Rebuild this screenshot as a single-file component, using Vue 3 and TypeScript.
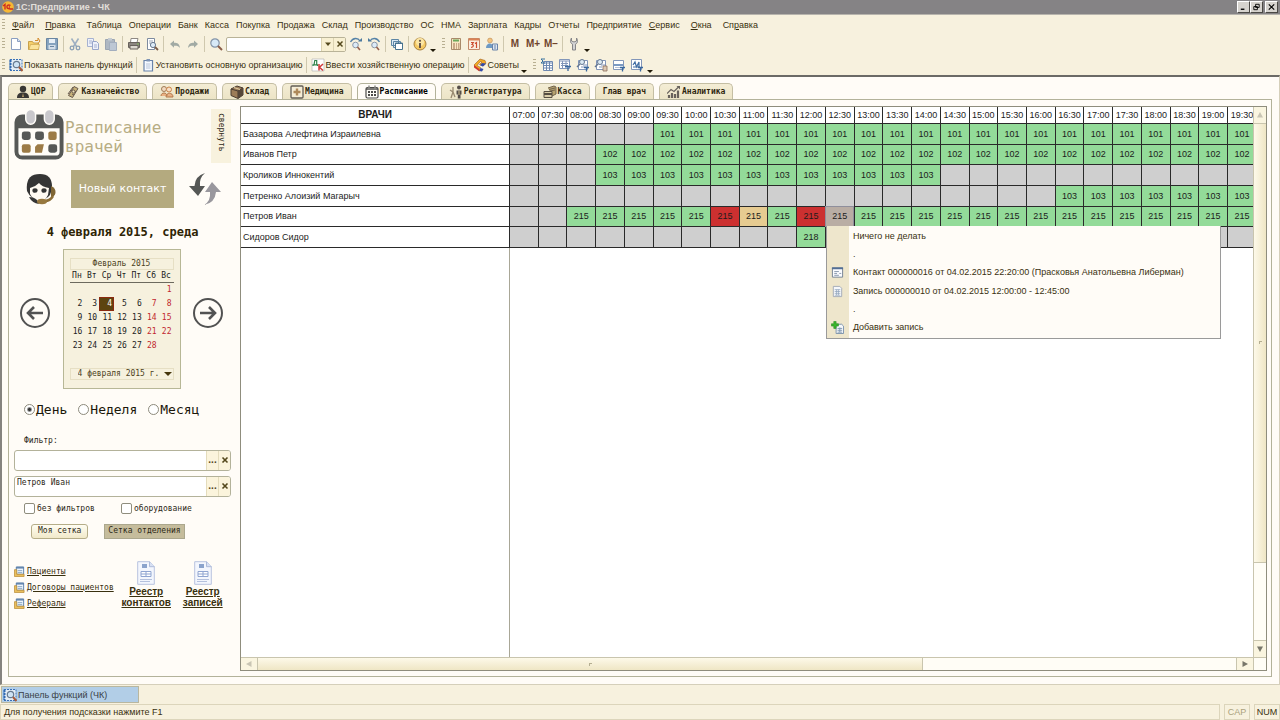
<script setup lang="ts">
import { ref } from 'vue'

interface MenuEntry { before?: string; key?: string; after: string; wide?: boolean }
interface Tab { id: string; label: string; icon?: string }
interface Doctor { name: string; room: string; from: number; to: number; marks?: Record<number, string> }
interface ContextEntry { text: string; icon?: string }

const menu: MenuEntry[] = [
  { key: 'Ф', after: 'айл', wide: true },
  { key: 'П', after: 'равка', wide: true },
  { after: 'Таблица' }, { after: 'Операции' }, { after: 'Банк' }, { after: 'Касса' },
  { after: 'Покупка' }, { after: 'Продажа' }, { after: 'Склад' }, { after: 'Производство' },
  { after: 'ОС' }, { after: 'НМА' }, { after: 'Зарплата' }, { after: 'Кадры' },
  { after: 'Отчеты' }, { after: 'Предприятие' },
  { key: 'С', after: 'ервис', wide: true },
  { key: 'О', after: 'кна', wide: true },
  { before: 'Сп', key: 'р', after: 'авка' },
]

const fileTools: string[][] = [['new', 'open', 'save'], ['cut', 'copy', 'paste'], ['print', 'preview'], ['undo', 'redo']]
const memory = ['M', 'M+', 'M−']
const actions = [
  { icon: 'panel', text: 'Показать панель функций' },
  { icon: 'clip', text: 'Установить основную организацию' },
  { icon: 'dk', text: 'Ввести хозяйственную операцию' },
  { icon: 'tips', text: 'Советы' },
]
const reports = ['rep1', 'rep2', 'rep3', 'rep4', 'rep5', 'rep6']

const tabs: Tab[] = [
  { id: 'cor', label: 'ЦОР', icon: 't-man' },
  { id: 'treasury', label: 'Казначейство', icon: 't-money' },
  { id: 'sales', label: 'Продажи', icon: 't-people' },
  { id: 'stock', label: 'Склад', icon: 't-box' },
  { id: 'medicine', label: 'Медицина', icon: 't-cross' },
  { id: 'schedule', label: 'Расписание', icon: 't-cal' },
  { id: 'registry', label: 'Регистратура', icon: 't-reg' },
  { id: 'cash', label: 'Касса', icon: 't-cash' },
  { id: 'chief', label: 'Глав врач' },
  { id: 'analytics', label: 'Аналитика', icon: 't-chart' },
]
const activeTab = ref('schedule')

const weekdays = ['Пн', 'Вт', 'Ср', 'Чт', 'Пт', 'Сб', 'Вс']
const weeks: (number | null)[][] = Array.from({ length: 5 }, (_, w) =>
  Array.from({ length: 7 }, (_, d) => {
    const day = w * 7 + d - 5
    return day >= 1 && day <= 28 ? day : null
  }),
)
const selectedDay = ref(4)
const period = ref('День')
const periods = ['День', 'Неделя', 'Месяц']
const filterA = ref('')
const filterB = ref('Петров Иван')
const links = ['Пациенты', 'Договоры пациентов', 'Рефералы']
const registers = [['Реестр', 'контактов'], ['Реестр', 'записей']]

const times = Array.from({ length: 26 }, (_, i) => {
  const h = String(7 + Math.floor(i / 2)).padStart(2, '0')
  return `${h}:${i % 2 ? '30' : '00'}`
})
const doctors: Doctor[] = [
  { name: 'Базарова Алефтина Израилевна', room: '101', from: 5, to: 25 },
  { name: 'Иванов Петр', room: '102', from: 3, to: 25 },
  { name: 'Кроликов Иннокентий', room: '103', from: 3, to: 14 },
  { name: 'Петренко Алоизий Магарыч', room: '103', from: 19, to: 25 },
  { name: 'Петров Иван', room: '215', from: 2, to: 25, marks: { 7: 'busy', 8: 'held', 10: 'busy', 11: 'picked' } },
  { name: 'Сидоров Сидор', room: '218', from: 10, to: 10 },
]
const isOpen = (d: Doctor, i: number) => i >= d.from && i <= d.to
const slotClass = (d: Doctor, i: number) => (isOpen(d, i) ? d.marks?.[i] ?? 'free' : 'off')

const contextMenu: ContextEntry[] = [
  { text: 'Ничего не делать' },
  { text: '.' },
  { text: 'Контакт 000000016 от 04.02.2015 22:20:00 (Прасковья Анатольевна Либерман)', icon: 'c-form' },
  { text: 'Запись 000000010 от 04.02.2015 12:00:00 - 12:45:00', icon: 'c-doc' },
  { text: '.' },
  { text: 'Добавить запись', icon: 'c-add' },
]
</script>

<template>
  <div class="app">
    <svg class="sprite" aria-hidden="true">
      <symbol id="new" viewBox="0 0 14 14"><path d="M2.5 1.5h6l3 3v8h-9z" fill="#fff" stroke="#8b9fc0" /><path d="M8.5 1.5v3h3" fill="#d7e2f3" stroke="#8b9fc0" /></symbol>
      <symbol id="open" viewBox="0 0 14 14"><path d="M1.500 4.500h4l1 1.500h5v6.500h-10z" fill="#f5cf6a" stroke="#c9a14a" /><path d="M2 12.500l1.500-5h9l-1 5z" fill="#fbe49b" stroke="#cfa850" stroke-width=".7" /><path d="M8 3.500h3V1l2 3-2 2.500" fill="none" stroke="#d48b2c" /></symbol>
      <symbol id="save" viewBox="0 0 14 14"><path d="M1.500 1.500h11v11h-11z" fill="#86a3bf" stroke="#6a86a2" /><path d="M4 2h6v4H4z" fill="#e8eff6" /><path d="M3.500 8h7v4.500h-7z" fill="#d4dee9" /><path d="M5 9.500h4" stroke="#6a86a2" /></symbol>
      <symbol id="cut" viewBox="0 0 14 14"><path d="M3.500 1.500l5 8M10.500 1.500l-5 8" stroke="#9fb0c2" stroke-width="1.600" /><circle cx="4" cy="11" r="1.800" fill="none" stroke="#8ca0b5" stroke-width="1.300" /><circle cx="10" cy="11" r="1.800" fill="none" stroke="#8ca0b5" stroke-width="1.300" /></symbol>
      <symbol id="copy" viewBox="0 0 14 14"><path d="M1.500 1.500h6v8h-6z" fill="#eef1fa" stroke="#a6b2d0" /><path d="M6.500 4.500h4l2 2v6h-6z" fill="#eef1fa" stroke="#98a6c9" /><path d="M3 4h3M3 6h3M8 8h3M8 10h3" stroke="#a6b2d0" /></symbol>
      <symbol id="paste" viewBox="0 0 14 14"><path d="M1.500 2.500h9v10h-9z" fill="#aeb7c2" stroke="#9ba5b1" /><path d="M4 1h4v2.500H4z" fill="#c5cbd2" /><path d="M5.500 5.500h7v8h-7z" fill="#bdc7d4" stroke="#a3aebe" /></symbol>
      <symbol id="print" viewBox="0 0 14 14"><path d="M4 1.500h7l-1 4H3.500z" fill="#fff" stroke="#8e8984" /><path d="M1.500 5.500h11v5h-11z" fill="#8b8580" stroke="#68625d" /><path d="M3 8.500h8v3.500H3z" fill="#ddd8d0" stroke="#68625d" /><circle cx="11" cy="7" r=".8" fill="#7ac04c" /></symbol>
      <symbol id="preview" viewBox="0 0 14 14"><path d="M2.500 1.500h7v11h-7z" fill="#fff" stroke="#7d8b9f" /><path d="M4 4h4M4 6h2" stroke="#9aa6b8" /><circle cx="8" cy="8" r="2.600" fill="#dcebf8" stroke="#67788f" /><path d="M10 10l3 3" stroke="#7a5b46" stroke-width="1.800" /></symbol>
      <symbol id="undo" viewBox="0 0 14 14"><path d="M2 7l4-3.500v2.200c3.500 0 5.500 1 6 5.300-1.500-2-3-2.500-6-2.300v2z" fill="#a1aaa4" /></symbol>
      <symbol id="redo" viewBox="0 0 14 14"><path d="M12 7L8 3.500v2.200c-3.500 0-5.500 1-6 5.300 1.500-2 3-2.500 6-2.300v2z" fill="#a1aaa4" /></symbol>
      <symbol id="find" viewBox="0 0 14 14"><circle cx="6" cy="6" r="4.200" fill="#d7e9f7" stroke="#8494a8" stroke-width="1.200" /><path d="M9 9l4 4" stroke="#8a5d48" stroke-width="2" /></symbol>
      <symbol id="next" viewBox="0 0 14 14"><circle cx="6.500" cy="8" r="2.800" fill="#dcebf8" stroke="#8a97a8" /><path d="M8.500 10l2.500 3" stroke="#96604d" stroke-width="1.600" /><path d="M1.500 5C4 .5 9 .5 11 4" fill="none" stroke="#5683a8" stroke-width="1.300" /><path d="M9 4.500h4V1z" fill="#4c7a9f" /></symbol>
      <symbol id="prev" viewBox="0 0 14 14"><circle cx="7.500" cy="8" r="2.800" fill="#dcebf8" stroke="#8a97a8" /><path d="M9.500 10l2.500 3" stroke="#96604d" stroke-width="1.600" /><path d="M12.500 5C10 .5 5 .5 3 4" fill="none" stroke="#5683a8" stroke-width="1.300" /><path d="M5 4.500H1V1z" fill="#4c7a9f" /></symbol>
      <symbol id="wins" viewBox="0 0 14 14"><path d="M1.500 2.500h7v6h-7zM3.500 4.500h7v6h-7z" fill="#dbe9f4" stroke="#5d86a5" /><path d="M5.500 6h7v6.500h-7z" fill="#fff" stroke="#48738f" /><path d="M5 6.500h8" stroke="#48738f" /></symbol>
      <symbol id="info" viewBox="0 0 14 14"><circle cx="7" cy="7" r="6" fill="#f5c964" stroke="#a88242" /><circle cx="7" cy="5" r="4" fill="#fbe6a5" /><path d="M7 6v5" stroke="#66554a" stroke-width="2" /><circle cx="7" cy="3.800" r="1.100" fill="#66554a" /></symbol>
      <symbol id="calc" viewBox="0 0 14 14"><path d="M2.500 1.500h9v11h-9z" fill="#f8e5c1" stroke="#a88a6a" /><path d="M4 3.500h6" stroke="#6ca85c" stroke-width="2" /><path d="M4 7h2M7 7h1M9 7h1.500M4 9h2M7 9h1M9 9h1.500M4 11h2M7 11h1M9 11h1.500" stroke="#996b4c" /></symbol>
      <symbol id="cal31" viewBox="0 0 14 14"><path d="M1.500 1.500h11v11h-11z" fill="#fbeee0" stroke="#c28a6a" /><path d="M2 2.500h10" stroke="#db8255" stroke-width="2" /><path d="M4 5.500h2.300L5 7.500c2 0 1.800 3-.9 2.800M8 6.500l1.500-1v5.500" fill="none" stroke="#cc4c2f" stroke-width="1.200" /></symbol>
      <symbol id="users" viewBox="0 0 14 14"><circle cx="5" cy="3.500" r="2.400" fill="#f3c47f" stroke="#ba8a55" stroke-width=".6" /><path d="M1 11c0-6 7-6 8 0z" fill="#6e9ac4" /><path d="M7.500 7h5v6h-5z" fill="#dce6f2" stroke="#6983a8" /><path d="M9 9h2M9 11h2" stroke="#6983a8" /></symbol>
      <symbol id="wrench" viewBox="0 0 14 14"><path d="M5.500 13V7.200C3 6 3 3 4.500 1v3l2.500 1 2.500-1V1c1.500 2 1.500 5-1 6.200V13z" fill="#d2d2d4" stroke="#858588" /></symbol>
      <symbol id="panel" viewBox="0 0 14 14"><path d="M1 1.500h12v11H1z" fill="#e4edf6" stroke="#3a72b8" stroke-dasharray="2 1" /><path d="M1.500 2v10" stroke="#2f69b3" stroke-width="2" stroke-dasharray="2 1" /><circle cx="7.500" cy="6.500" r="3.200" fill="#cfe3f4" stroke="#677a90" stroke-width="1.200" /><path d="M10 9l3.500 4" stroke="#a85b3b" stroke-width="2" /></symbol>
      <symbol id="clip" viewBox="0 0 14 14"><path d="M3 2.500h8.500v10.500H3z" fill="#f5f9ff" stroke="#6983aa" stroke-width="1.200" /><path d="M5.500 1h3.500v2.500H5.500z" fill="#7f95b5" /><path d="M5 6h4.500M5 8h4.500M5 10h4.500" stroke="#b7c4d8" /></symbol>
      <symbol id="dk" viewBox="0 0 14 14"><path d="M1 1h12v12H1z" fill="#fff" stroke="#b4b4b4" stroke-width=".7" /><path d="M2 8V6.800h4.500V8M3 6.800L3.800 2.500H5.700v4.300" fill="none" stroke="#31844c" stroke-width="1.200" /><path d="M8 6v6.500M12 6L8.500 9.300 12 12.500" fill="none" stroke="#d23a3a" stroke-width="1.500" /></symbol>
      <symbol id="tips" viewBox="0 0 14 14"><path d="M1 7l6-6 5 1.500 1 3-3 2.500-3.500-1.500L9 4 7.500 3.500 4 7.500l3.500 2-1 3.500z" fill="#f3aa22" stroke="#9c5b20" stroke-width=".6" /><path d="M1 7l5.500 4V13.500L1 9.500z" fill="#d03b2e" /><path d="M9 5l4 .5-3 3-3-1.300zM7.500 10l3 1-1.500 2.500-2.500-.5z" fill="#354ba8" /></symbol>
      <symbol id="rep1" viewBox="0 0 14 14"><path d="M3.500 3.500h9v9h-9z" fill="#fff" stroke="#6e88b0" /><path d="M4 5h8.500M4 7.500h8.500M4 10h8.500M6.500 4v8.500M9.500 4v8.500" stroke="#6e88b0" /><path d="M5 1H1l2 2-2 2h4" fill="none" stroke="#36709d" /></symbol>
      <symbol id="rep2" viewBox="0 0 14 14"><path d="M1.500 1.500h10v9h-10z" fill="#fff" stroke="#8296b9" /><path d="M2 3h9M3 5.500h7M3 7.500h7M4.500 3v7M8 3v7" stroke="#8296b9" /><path d="M7 8.500h6M10 8.500V13" stroke="#39679d" stroke-width="1.300" /></symbol>
      <symbol id="rep3" viewBox="0 0 14 14"><path d="M2.500 2.500h9v9h-9z" fill="#fff" stroke="#8296b9" /><circle cx="6" cy="4" r="2.500" fill="#dceaf4" stroke="#667891" /><path d="M4 6L1 9" stroke="#667891" stroke-width="1.500" /><path d="M5 9h6M7 7h4" stroke="#8296b9" /><path d="M8 9.500h5M10.500 9.500v4" stroke="#39679d" stroke-width="1.300" /></symbol>
      <symbol id="rep4" viewBox="0 0 14 14"><path d="M2.500 2.500h9v9h-9z" fill="#fff" stroke="#8296b9" /><circle cx="6" cy="4" r="2.500" fill="#dceaf4" stroke="#667891" /><path d="M4 6L1 9" stroke="#667891" stroke-width="1.500" /><path d="M5 9h3M7 7h4" stroke="#8296b9" /><path d="M9 8h4v5H9z" fill="#ddc8b2" stroke="#8c6e5e" stroke-width=".8" /></symbol>
      <symbol id="rep5" viewBox="0 0 14 14"><path d="M1.500 2.500h10v9h-10z" fill="#fff" stroke="#8296b9" /><path d="M2 7h9" stroke="#5b81b3" stroke-width="1.600" /><path d="M3 9.500h5" stroke="#b5c0d5" /><path d="M8 9.500h5M10.500 9.500v4" stroke="#39679d" stroke-width="1.300" /></symbol>
      <symbol id="rep6" viewBox="0 0 14 14"><path d="M1.500 1.500h10v10h-10z" fill="#fff" stroke="#8296b9" /><path d="M3 7l2-3 1.500 5L9 4v5M3 9h7" fill="none" stroke="#416da3" stroke-width="1.200" /><path d="M8 9.500h5M10.500 9.500v4" stroke="#39679d" stroke-width="1.300" /></symbol>
      <symbol id="t-man" viewBox="0 0 14 14"><circle cx="7" cy="4" r="3.200" fill="#393735" /><path d="M1 13c0-4 2-5 4.500-5.500h3C11 8 13 9 13 13z" fill="#393735" /><path d="M7 8l-1 4h2z" fill="#b59a6a" /></symbol>
      <symbol id="t-money" viewBox="0 0 14 14"><path d="M8 1.500l4 2-5.500 9-4-2z" fill="#c7b27a" stroke="#67594c" /><path d="M2 9l5-7M8 6l2 1M6 9l2 1" stroke="#67594c" /><circle cx="7.500" cy="6.500" r="1.500" fill="#efe3b9" stroke="#67594c" /></symbol>
      <symbol id="t-people" viewBox="0 0 14 14"><circle cx="4" cy="4" r="2.500" fill="#f2dac0" stroke="#a07a57" /><circle cx="9" cy="4.500" r="2.500" fill="#f6dfc6" stroke="#cc8449" /><path d="M1 11c0-4 6-4 6 0M6 12c0-5 7-5 7 0z" fill="#e9b184" stroke="#b3794b" /></symbol>
      <symbol id="t-box" viewBox="0 0 14 14"><path d="M1 4l6-3 6 2v7l-5 3.500-7-3z" fill="#9c7c58" stroke="#493c31" /><path d="M1 4l7 2 5-3M8 6v7" fill="none" stroke="#493c31" /><path d="M8 6l5-3v7l-5 3.500z" fill="#554639" /><path d="M4 2.500l6 2" stroke="#e0cfa5" /></symbol>
      <symbol id="t-cross" viewBox="0 0 14 14"><rect x="1" y="1" width="12" height="12" rx="1" fill="#f5edd6" stroke="#635d56" stroke-width="1.300" /><path d="M5.800 3.500h2.400v2.300h2.300v2.400H8.200v2.300H5.800V8.200H3.500V5.800h2.300z" fill="#ae895a" /></symbol>
      <symbol id="t-cal" viewBox="0 0 14 14"><rect x="1" y="2.500" width="12" height="10.500" rx="1.500" fill="#fffdf7" stroke="#4c4b49" stroke-width="1.200" /><path d="M1 4h12" stroke="#4c4b49" stroke-width="1.500" /><path d="M4 .5v4M10 .5v4" stroke="#8c8c88" stroke-width="1.500" /><path d="M3 7h8M3 10h8" stroke="#4c4b49" stroke-width="2" stroke-dasharray="2 1" /></symbol>
      <symbol id="t-reg" viewBox="0 0 14 14"><path d="M4 2v5l-2 6M4 7l2 5M1 5l3 2" fill="none" stroke="#98896f" stroke-width="1.300" /><circle cx="10" cy="2.500" r="2" fill="#554e49" /><path d="M7.500 5.500h5v4h-1V13.500H8.800V9.500H7.500z" fill="#554e49" /><path d="M10 6v4" stroke="#d0bf91" /></symbol>
      <symbol id="t-cash" viewBox="0 0 14 14"><path d="M5 3l6-2 2 1v7l-4 2" fill="#b5a26f" stroke="#71634b" /><path d="M6 4.500l6-1.500M7 6l5-1" stroke="#71634b" /><path d="M1 6.500h8v6H1z" fill="#d9cda8" stroke="#564e42" /><path d="M1 9h8" stroke="#564e42" stroke-width="2" /></symbol>
      <symbol id="t-chart" viewBox="0 0 14 14"><path d="M2 13v-3M5 13V8M8 13V9M11 13V5.500" stroke="#68625c" stroke-width="2.200" /><path d="M0 8.500l4-4 3 2 5-5" fill="none" stroke="#68625c" stroke-width="1.200" /><path d="M9.500 1H13v3.500z" fill="#68625c" /></symbol>
      <symbol id="c-form" viewBox="0 0 14 14"><path d="M1.500 2h11v10h-11z" fill="#fbfcff" stroke="#717f91" /><path d="M1 2.500h12" stroke="#536f95" stroke-width="2" /><path d="M3.500 6h5M3.500 8h3M3.500 10h5M9 8h2" stroke="#8494aa" /></symbol>
      <symbol id="c-doc" viewBox="0 0 14 14"><path d="M2.500 1.500h7l2 2v9h-9z" fill="#f6f8fb" stroke="#a1a9b5" /><path d="M4 5h6M4 7h6M4 9h6M4 11h6M6 5v6M8 5v6" stroke="#90a4bd" stroke-width=".8" /></symbol>
      <symbol id="c-add" viewBox="0 0 14 14"><path d="M5.500 3.500h6l2 2v8h-8z" fill="#f6f8fb" stroke="#7890a9" /><path d="M7 8h5M7 10h5M7 12h5M9.500 7v5" stroke="#8097b1" /><path d="M3 0.500h2.500v2.500h2.500v2.500H5.500v2.500H3V5.500H.5V3H3z" fill="#39b52c" stroke="#22851b" stroke-width=".6" /></symbol>
      <symbol id="folder" viewBox="0 0 12 12"><path d="M2.500 1h8v8h-8z" fill="#eef5fc" stroke="#557ba7" /><path d="M2.500 2h8" stroke="#557ba7" stroke-width="1.500" /><path d="M4 5h5M4 7h5" stroke="#89a5c4" /><path d="M.5 4v7.500h10.500V9H3V4z" fill="#eabf5c" stroke="#b98c36" stroke-width=".8" /></symbol>
      <symbol id="register" viewBox="0 0 18 24"><path d="M.7.700h12l4.600 5v17.600H.700z" fill="#f3f6fd" stroke="#b8c3df" /><path d="M12.500.7v5h5" fill="#d7e0f3" stroke="#aebbd9" /><path d="M5 3v4h5V3z" fill="#8ba3cc" /><path d="M4 10.500h10v5H4zM4 13h10M9 10.500v5" fill="#fff" stroke="#90a5d1" /><path d="M3 18.500h12M3 20.500h10" stroke="#b5c1dd" /></symbol>
    </svg>

    <header class="titlebar">
      <svg class="logo" viewBox="0 0 12 12"><circle cx="6" cy="6" r="5.800" fill="#f7b733" /><path d="M1 5l2-1.500v5M8.500 4.500C6 3 4.500 5 5 6.500 5.300 8 7 8 11 8M8 6H6.800" fill="none" stroke="#cf2e20" stroke-width="1.400" /></svg>
      <span class="title">1С:Предприятие - ЧК</span>
      <div class="winbuttons">
        <button type="button" aria-label="Свернуть окно"><svg viewBox="0 0 10 8"><path d="M2 6.500h4" stroke="#000" stroke-width="1.500" /></svg></button>
        <button type="button" aria-label="Восстановить окно"><svg viewBox="0 0 10 8"><path d="M4 1h4v3.500H4zM2 3.500h4V7H2z" fill="#d6d3ce" stroke="#000" /></svg></button>
        <button type="button" class="close" aria-label="Закрыть"><svg viewBox="0 0 10 8"><path d="M2 1l6 6M8 1L2 7" stroke="#000" stroke-width="1.300" /></svg></button>
      </div>
    </header>

    <nav class="menubar">
      <span class="grip"></span>
      <button v-for="m in menu" :key="m.after" type="button" :class="{ wide: m.wide }">{{ m.before }}<u v-if="m.key">{{ m.key }}</u>{{ m.after }}</button>
    </nav>

    <div class="toolbar">
      <span class="grip"></span>
      <template v-for="(group, g) in fileTools" :key="g">
        <button v-for="i in group" :key="i" type="button" class="tool" :aria-label="i"><svg class="ico"><use :href="'#' + i" /></svg></button>
        <span class="sep"></span>
      </template>
      <button type="button" class="tool" aria-label="Найти"><svg class="ico"><use href="#find" /></svg></button>
      <div class="combo">
        <input type="text" aria-label="Строка поиска" />
        <button type="button" aria-label="Список"><svg viewBox="0 0 8 8"><path d="M1 2.500h6L4 6z" fill="#54481c" /></svg></button>
        <button type="button" aria-label="Очистить"><svg viewBox="0 0 8 8"><path d="M1.500 1.500l5 5M6.500 1.500l-5 5" stroke="#54481c" stroke-width="1.500" /></svg></button>
      </div>
      <button type="button" class="tool" aria-label="Найти следующий"><svg class="ico"><use href="#next" /></svg></button>
      <button type="button" class="tool" aria-label="Найти предыдущий"><svg class="ico"><use href="#prev" /></svg></button>
      <span class="sep"></span>
      <button type="button" class="tool" aria-label="Окна"><svg class="ico"><use href="#wins" /></svg></button>
      <span class="sep"></span>
      <button type="button" class="tool" aria-label="Справка"><svg class="ico"><use href="#info" /></svg></button>
      <button type="button" class="more" aria-label="Ещё"></button>
      <span class="grip inner"></span>
      <button v-for="i in ['calc', 'cal31', 'users']" :key="i" type="button" class="tool" :aria-label="i"><svg class="ico"><use :href="'#' + i" /></svg></button>
      <span class="sep"></span>
      <button v-for="m in memory" :key="m" type="button" class="tool mem">{{ m }}</button>
      <span class="sep"></span>
      <button type="button" class="tool" aria-label="Сервис"><svg class="ico"><use href="#wrench" /></svg></button>
      <button type="button" class="more" aria-label="Ещё"></button>
    </div>

    <div class="toolbar second">
      <span class="grip"></span>
      <template v-for="(a, i) in actions" :key="a.text">
        <span v-if="i" class="sep"></span>
        <button type="button" class="action"><svg class="ico"><use :href="'#' + a.icon" /></svg>{{ a.text }}</button>
      </template>
      <button type="button" class="more" aria-label="Ещё"></button>
      <span class="grip inner"></span>
      <button v-for="r in reports" :key="r" type="button" class="tool" :aria-label="r"><svg class="ico"><use :href="'#' + r" /></svg></button>
      <button type="button" class="more" aria-label="Ещё"></button>
    </div>

    <main class="workspace">
      <div class="tabs" role="tablist">
        <button v-for="t in tabs" :key="t.id" type="button" role="tab" :aria-selected="t.id === activeTab" :class="{ active: t.id === activeTab }" @click="activeTab = t.id">
          <svg v-if="t.icon" class="ico"><use :href="'#' + t.icon" /></svg>{{ t.label }}
        </button>
      </div>

      <div class="page">
        <aside class="side">
          <div class="heading">
            <svg class="bigcal" viewBox="0 0 52 52">
              <rect x="2.500" y="7" width="46" height="42" rx="6" fill="#fffdf8" stroke="#565856" stroke-width="4" />
              <path d="M2 19V12q0-6 6-6h35q6 0 6 6v7z" fill="#565856" />
              <rect x="12" y="0" width="10" height="15" rx="5" fill="#c9c8cc" stroke="#fffdf8" stroke-width="1.500" />
              <rect x="31" y="0" width="10" height="15" rx="5" fill="#c9c8cc" stroke="#fffdf8" stroke-width="1.500" />
              <g fill="#565856"><rect x="8" y="22.500" width="9" height="8.500" rx="2.500" /><rect x="21.500" y="22.500" width="9" height="8.500" rx="2.500" /><rect x="35" y="35.500" width="9" height="8.500" rx="2.500" /></g>
              <g fill="#9c7b46"><rect x="35" y="22.500" width="8.500" height="8.500" rx="2" /><rect x="8" y="35.500" width="9" height="8.500" rx="2" /><path d="M24 35.500h6.500l-2 8.500h-7v-6z" /></g>
            </svg>
            <h1>Расписание<br />врачей</h1>
            <button type="button" class="collapse">свернуть</button>
          </div>

          <div class="contact">
            <svg class="agent" viewBox="0 0 30 32">
              <path d="M1 18Q-1 1 14 1q13 0 12 15l-2 6q-4 5-10 5-9 0-13-9z" fill="#353535" />
              <path d="M4 15q5-1 9-5 3 4 10 5l-1 7q-3 6-8 7-7-2-10-8z" fill="#fffaf2" />
              <ellipse cx="9" cy="17.500" rx="2.600" ry="2.300" fill="#353535" /><ellipse cx="18" cy="17.500" rx="2.600" ry="2.300" fill="#353535" />
              <path d="M3 24q5 0 8 3l2 4q-7-1-10-7z" fill="#353535" />
              <path d="M25 13q5 2 4.500 7-1 4-4.500 4z" fill="#7f6534" />
              <path d="M27 23q-3 5-8 5" fill="none" stroke="#8c6e39" stroke-width="2.500" /><ellipse cx="16" cy="28.500" rx="5" ry="2.800" fill="#97783f" />
            </svg>
            <button type="button" class="newcontact">Новый контакт</button>
            <button type="button" class="plain" aria-label="Обновить">
              <svg class="refresh" viewBox="0 0 32 34"><path d="M16 1Q6 4 5.500 14H0l9 10 7-10h-5Q10 6 16 1z" fill="#555755" /><path d="M15 33q11-2 12-13h5L23 10l-7 10h5q1 9-6 13z" fill="#99979d" /></svg>
            </button>
          </div>

          <p class="today">4 февраля 2015, среда</p>

          <div class="calrow">
            <button type="button" class="plain" aria-label="Предыдущий день"><svg class="round" viewBox="0 0 30 30"><circle cx="15" cy="15" r="14" fill="none" stroke="#525252" stroke-width="2" /><path d="M23 15H8M14 9l-6 6 6 6" fill="none" stroke="#525252" stroke-width="2.600" /></svg></button>
            <div class="calendar">
              <div class="month">Февраль 2015</div>
              <table>
                <thead><tr><th v-for="w in weekdays" :key="w">{{ w }}</th></tr></thead>
                <tbody>
                  <tr v-for="(week, w) in weeks" :key="w">
                    <td v-for="(d, i) in week" :key="i"><button v-if="d" type="button" :class="{ weekend: i > 4, selected: d === selectedDay }" @click="selectedDay = d">{{ d }}</button></td>
                  </tr>
                </tbody>
              </table>
              <div class="dayselect">
                <select aria-label="Дата"><option>4 февраля 2015 г.</option></select>
                <svg viewBox="0 0 8 8"><path d="M0 2h8L4 6z" fill="#46370c" /></svg>
              </div>
            </div>
            <button type="button" class="plain" aria-label="Следующий день"><svg class="round" viewBox="0 0 30 30"><circle cx="15" cy="15" r="14" fill="none" stroke="#525252" stroke-width="2" /><path d="M7 15h15M16 9l6 6-6 6" fill="none" stroke="#525252" stroke-width="2.600" /></svg></button>
          </div>

          <div class="periods">
            <label v-for="p in periods" :key="p"><input v-model="period" type="radio" name="period" :value="p" />{{ p }}</label>
          </div>

          <label class="filterlabel" for="filter-a">Фильтр:</label>
          <div class="field">
            <input id="filter-a" v-model="filterA" type="text" />
            <button type="button" aria-label="Выбрать">...</button>
            <button type="button" aria-label="Очистить" @click="filterA = ''"><svg viewBox="0 0 8 8"><path d="M1.500 1.500l5 5M6.500 1.500l-5 5" stroke="#54481c" stroke-width="1.600" /></svg></button>
          </div>
          <div class="field">
            <input v-model="filterB" type="text" aria-label="Врач" />
            <button type="button" aria-label="Выбрать">...</button>
            <button type="button" aria-label="Очистить" @click="filterB = ''"><svg viewBox="0 0 8 8"><path d="M1.500 1.500l5 5M6.500 1.500l-5 5" stroke="#54481c" stroke-width="1.600" /></svg></button>
          </div>

          <div class="checks">
            <label><input type="checkbox" />без фильтров</label>
            <label><input type="checkbox" />оборудование</label>
          </div>
          <div class="grids">
            <button type="button">Моя сетка</button>
            <button type="button" class="on">Сетка отделения</button>
          </div>

          <div class="shortcuts">
            <ul>
              <li v-for="l in links" :key="l"><svg><use href="#folder" /></svg><a href="#">{{ l }}</a></li>
            </ul>
            <a v-for="r in registers" :key="r[1]" href="#" class="register"><svg><use href="#register" /></svg>{{ r[0] }}<br />{{ r[1] }}</a>
          </div>
        </aside>

        <section class="sheet">
          <div class="viewport">
            <table class="schedule">
              <thead>
                <tr><th class="names">ВРАЧИ</th><th v-for="t in times" :key="t">{{ t }}</th></tr>
              </thead>
              <tbody>
                <tr v-for="d in doctors" :key="d.name">
                  <td class="name">{{ d.name }}</td>
                  <td v-for="(t, i) in times" :key="t" :class="slotClass(d, i)">
                    {{ isOpen(d, i) ? d.room : '' }}
                    <ul v-if="slotClass(d, i) === 'picked'" class="context">
                      <li v-for="(c, n) in contextMenu" :key="n">
                        <button type="button"><span class="slot"><svg v-if="c.icon"><use :href="'#' + c.icon" /></svg></span>{{ c.text }}</button>
                      </li>
                    </ul>
                  </td>
                </tr>
              </tbody>
            </table>
            <div class="frozen"></div>
          </div>
          <div class="vbar">
            <button type="button" class="dim" aria-label="Вверх"><svg viewBox="0 0 8 8"><path d="M1 6.500h6L4 1z" /></svg></button>
            <div class="track"><div class="thumb"><span></span></div></div>
            <button type="button" aria-label="Вниз"><svg viewBox="0 0 8 8"><path d="M1 1.500h6L4 7z" /></svg></button>
          </div>
          <div class="hbar">
            <button type="button" class="dim" aria-label="Влево"><svg viewBox="0 0 8 8"><path d="M6.500 1v6L1 4z" /></svg></button>
            <div class="track"><div class="thumb"><span></span></div></div>
            <button type="button" aria-label="Вправо"><svg viewBox="0 0 8 8"><path d="M1.500 1v6L7 4z" /></svg></button>
          </div>
          <div class="corner"></div>
        </section>
      </div>
    </main>

    <div class="taskbar">
      <button type="button"><svg class="ico"><use href="#panel" /></svg>Панель функций (ЧК)</button>
    </div>
    <footer class="status">
      <span class="hint">Для получения подсказки нажмите F1</span>
      <span class="lamp off">CAP</span>
      <span class="lamp">NUM</span>
    </footer>
  </div>
</template>

<style>
body { margin: 0; }
</style>

<style scoped>
.app {
  --cream: #f7f1de;
  --paper: #fffcf7;
  --line: #b3b29a;
  --mono: "DejaVu Sans Mono", "Liberation Mono", monospace;
  display: flex;
  flex-direction: column;
  min-height: 100vh;
  background: var(--cream);
  color: #39300f;
  font: 9px/12px "Liberation Sans", Arial, sans-serif;
}
.app *, .app *::before, .app *::after { box-sizing: border-box; }
button, input, select { font: inherit; color: inherit; margin: 0; padding: 0; border: 0; background: none; border-radius: 0; outline: 0; }
button { white-space: nowrap; }
ul { list-style: none; margin: 0; padding: 0; }
svg { display: block; flex: none; }
.sprite { position: absolute; width: 0; height: 0; }
.ico { width: 14px; height: 14px; }

.titlebar { display: flex; align-items: center; height: 15px; padding: 0 2px 1px; background: #858385; border-bottom: 1px solid #b7b4ad; color: #e2dfda; font-weight: bold; }
.logo { width: 12px; height: 12px; }
.title { flex: 1; padding-left: 2px; }
.winbuttons { display: flex; }
.winbuttons button { width: 13px; height: 12px; padding: 1px; background: #d6d3ce; border: 1px solid; border-color: #fff #4a4844 #4a4844 #fff; }
.winbuttons .close { margin-left: 2px; }
.winbuttons svg { width: 9px; height: 8px; }

.menubar { display: flex; align-items: center; height: 19px; gap: 7px; padding-left: 2px; }
.menubar .wide { margin-right: 4px; }
.grip { width: 3px; height: 12px; flex: none; background: repeating-linear-gradient(#b8af92 0 1px, transparent 1px 3px); }
.grip.inner { margin: 0 2px 0 5px; }
.toolbar { display: flex; align-items: center; height: 20px; padding-left: 2px; }
.toolbar > .grip:first-child { margin-right: 2px; }
.second { height: 21px; }
.tool { display: flex; align-items: center; justify-content: center; width: 18px; height: 18px; flex: none; }
.mem { font-weight: bold; font-size: 10px; color: #70442c; }
.sep { width: 1px; height: 16px; margin: 0 2px; flex: none; background: #cfc8ae; }
.action { display: flex; align-items: center; gap: 1px; padding: 0 1px 0 2px; }
.more { width: 8px; height: 18px; display: flex; align-items: flex-end; justify-content: center; flex: none; }
.more::after { content: ""; border: 3px solid transparent; border-top: 3px solid #201a08; border-bottom: 0; margin-bottom: 1px; }
.combo { display: flex; width: 120px; height: 15px; background: #fff; border: 1px solid #b9b398; border-radius: 2px; margin: 0 1px; }
.combo input { flex: 1; min-width: 0; padding: 0 2px; }
.combo button { width: 12px; display: grid; place-items: center; background: #f8f0d2; border-left: 1px solid #dcd3b2; }
.combo svg { width: 8px; height: 8px; }

.workspace { flex: 1; display: flex; flex-direction: column; padding: 6px 7px 7px 6px; background: var(--paper); border: 1px solid #d5cfba; border-top: 2px solid #6b6a66; border-left: 2px solid #85837f; }
.tabs { display: flex; gap: 5px; margin-bottom: -1px; }
.tabs button { display: flex; align-items: center; gap: 1px; height: 17px; padding: 0 7px; border: 1px solid #c4bea3; border-bottom-color: var(--line); border-radius: 5px 5px 0 0; background: linear-gradient(#f4edd5, #ece4c6); font: bold 8px/12px var(--mono); color: #2e260e; }
.tabs .active { background: var(--paper); border-color: var(--line); border-bottom-color: var(--paper); color: #000; }
.page { flex: 1; display: flex; border: 1px solid var(--line); padding: 6px 4px 5px 0; }

.side { width: 231px; flex: none; padding: 3px 9px 0 5px; font: 8px/12px var(--mono); color: #2e2917; display: flex; flex-direction: column; }
.heading { display: flex; align-items: flex-start; }
.bigcal { width: 51px; height: 52px; }
h1 { flex: 1; margin: 9px 0 0; font: 16px/19px var(--mono); color: #b7ad84; }
.collapse { width: 20px; height: 54px; writing-mode: vertical-rl; background: #f8f2de; padding-top: 4px; text-align: left; }
.contact { display: flex; align-items: center; justify-content: space-between; margin-top: 7px; padding: 0 10px 0 12px; }
.agent { width: 30px; height: 32px; }
.newcontact { width: 103px; height: 38px; background: #b4aa7f; color: #fff; font: 11px/14px "DejaVu Sans", sans-serif; }
.refresh { width: 32px; height: 34px; }
.today { margin: 16px 0 9px; text-align: center; font: bold 12px/16px var(--mono); color: #2e2404; }
.calrow { display: flex; justify-content: space-between; align-items: center; padding: 0 8px 0 6px; }
.round { width: 30px; height: 30px; }
.calrow .plain { padding-bottom: 11px; }
.calendar { width: 118px; padding: 8px 6px; background: #f6f1de; border: 1px solid #b7b796; color: #222; }
.month { text-align: center; border: 1px solid #e6dfc4; line-height: 10px; color: #4c421c; }
.calendar table { width: 100%; table-layout: fixed; border-collapse: collapse; margin-bottom: 15px; }
.calendar th { font-weight: normal; padding: 0; height: 12px; line-height: 11px; border-bottom: 1px solid #6c6a5e; }
.calendar td { padding: 0; height: 14px; }
.calendar td button { display: block; width: 100%; height: 14px; line-height: 14px; text-align: right; padding-right: 2px; }
.calendar .weekend { color: #c1272d; }
.calendar .selected { background: #5c4410; color: #fff; border: 1px solid #8b2a10; line-height: 12px; padding-right: 1px; }
.dayselect { display: flex; align-items: center; border: 1px solid #e6dfc4; color: #4c421c; padding: 0 1px 0 7px; }
.dayselect select { appearance: none; flex: 1; min-width: 0; height: 10px; line-height: 10px; }
.dayselect svg { width: 8px; height: 8px; }
.periods { display: flex; gap: 11px; margin-top: 13px; padding-left: 10px; font: 13px/16px var(--mono); color: #1b170a; }
.periods label { display: flex; align-items: center; gap: 1px; }
.periods input { appearance: none; width: 11px; height: 11px; border: 1px solid #8d8a7c; border-radius: 50%; background: #fff; }
.periods input:checked { background: radial-gradient(#333 0 1px, #fff 3px); }
.filterlabel { margin: 17px 0 3px; padding-left: 10px; }
.field { display: flex; height: 21px; border: 1px solid var(--line); border-radius: 3px; background: #fff; margin-bottom: 5px; overflow: hidden; flex: none; }
.field input { flex: 1; min-width: 0; padding: 0 2px 6px; }
.field button { width: 12px; display: grid; place-items: center; background: #fbf4dc; border-left: 1px solid #e4dcbc; font: bold 10px/12px "Liberation Sans", Arial, sans-serif; color: #54481c; }
.field svg { width: 8px; height: 8px; }
.checks { display: grid; grid-template-columns: 97px 1fr; padding-left: 10px; margin-top: 1px; }
.checks label { display: flex; align-items: center; gap: 2px; }
.checks input { appearance: none; width: 11px; height: 11px; border: 1px solid #8f8d7d; border-radius: 2px; background: #fff; }
.grids { display: flex; gap: 16px; margin-top: 9px; padding-left: 17px; }
.grids button { height: 15px; padding: 0 6px; border: 1px solid #b5ad88; border-radius: 3px; background: linear-gradient(#fffdf3, #f1e9c9); }
.grids .on { padding: 0 3px; border-radius: 0; background: #c5bc9c; border-color: #aba78d; }
.shortcuts { display: flex; align-items: flex-start; margin-top: 22px; }
.shortcuts ul { width: 104px; padding-top: 3px; }
.shortcuts li { display: flex; align-items: center; gap: 2px; height: 16px; }
.shortcuts li svg { width: 11px; height: 11px; }
.shortcuts a { color: #39300f; white-space: nowrap; }
.register { flex: 1; display: block; text-align: center; font: bold 10px/11px "Liberation Sans", Arial, sans-serif; }
.register svg { width: 18px; height: 24px; margin: 0 auto 1px; }

.sheet { flex: 1; min-width: 0; display: grid; grid-template: 1fr 13px / 1fr 13px; border: 1px solid #8f8d7d; background: #fff; }
.viewport { display: flex; flex-direction: column; min-width: 0; overflow: hidden; color: #1c1c1c; }
.schedule { width: calc(100% + 5px); height: 142px; flex: none; table-layout: fixed; border-collapse: collapse; margin: -1px 0 0 -1px; }
.schedule th, .schedule td { padding: 0; border: 1px solid #2a2a2a; text-align: center; font-weight: normal; line-height: 12px; white-space: nowrap; }
.schedule th { height: 17px; background: #fff; }
.schedule .names { width: 269px; font: bold 10px/12px "Liberation Sans", Arial, sans-serif; }
.schedule .name { text-align: left; padding-left: 2px; background: #fff; }
.schedule .free { background: #93db99; }
.schedule .off { background: #cfcfcf; }
.schedule .busy { background: #cc3030; }
.schedule .held { background: #e6cb91; }
.schedule .picked { position: relative; background: #b9ada4; outline: 1px solid #8f8f9c; outline-offset: -1px; }
.frozen { flex: 1; width: 269px; border-right: 1px solid #a9a797; }
.context { position: absolute; z-index: 2; top: 100%; left: 0; width: 395px; padding: 1px 0; border: 1px solid #9a9a9a; border-top: 0; background: linear-gradient(90deg, #eee6cc 22px, var(--paper) 22px); color: #39300f; }
.context button { display: flex; align-items: center; gap: 4px; width: 100%; height: 18px; text-align: left; }
.context li:nth-child(3n) { padding-bottom: 1px; }
.slot { width: 22px; display: grid; place-items: center; }
.slot svg { width: 13px; height: 13px; }
.vbar, .hbar { display: flex; background: #fffdf6; fill: #77766a; }
.vbar { flex-direction: column; border-left: 1px solid #c9c5ae; }
.hbar { border-top: 1px solid #c9c5ae; }
.vbar button, .hbar button { display: grid; place-items: center; background: #faf5e0; flex: none; }
.vbar button { height: 16px; }
.hbar button { width: 16px; }
.vbar svg, .hbar svg { width: 8px; height: 8px; }
.dim { fill: #c9c5b4; }
.track { flex: 1; min-width: 0; min-height: 0; border: solid #c9c5ae; }
.vbar .track { border-width: 1px 0; }
.hbar .track { border-width: 0 1px; }
.thumb { display: grid; place-items: center; }
.thumb span { width: 3px; height: 3px; border: solid #b5af92; border-width: 1px 0 0 1px; }
.vbar .thumb { height: 85%; border-bottom: 1px solid #c9c5ae; background: linear-gradient(90deg, #fdf9e9, #efe6c5); }
.hbar .thumb { width: 68%; height: 100%; border-right: 1px solid #c9c5ae; background: linear-gradient(#fdf9e9, #efe6c5); }
.corner { border: solid #c9c5ae; border-width: 1px 0 0 1px; background: #fffdf6; }

.taskbar { padding: 1px; height: 19px; }
.taskbar button { display: flex; align-items: center; gap: 1px; width: 138px; height: 17px; padding-left: 1px; background: #b2cee7; border: 1px solid #b9b79f; color: #394046; }
.status { display: flex; gap: 4px; height: 16px; }
.status span { border: 1px solid #dcd5bb; padding: 1px 3px; }
.hint { flex: 1; }
.status .lamp { width: 26px; padding: 1px 0; text-align: center; }
.lamp.off { color: #aaa17c; }
</style>
